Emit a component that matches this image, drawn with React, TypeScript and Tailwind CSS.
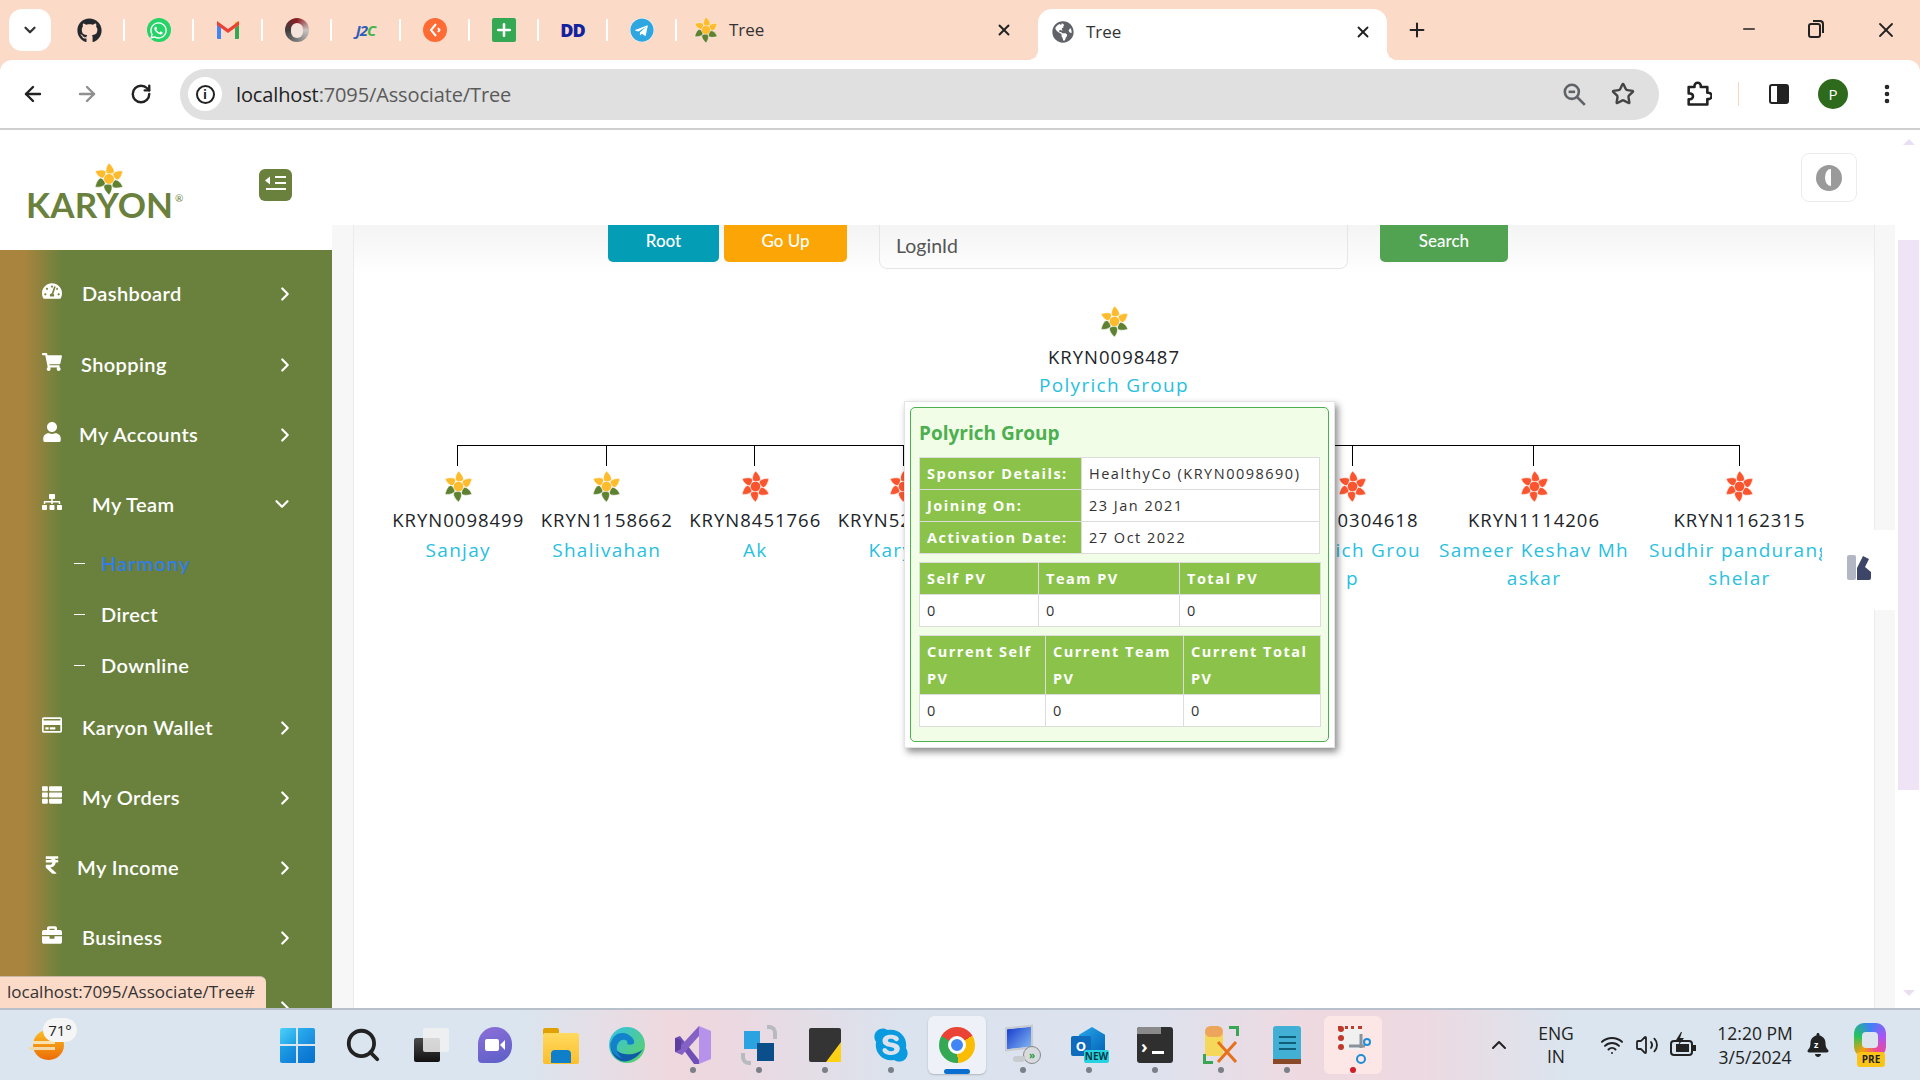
import React from "react";
import { ArrowLeft, ArrowRight, RotateCw, Star, MoreVertical, ChevronDown, ChevronRight, ChevronUp, X, Plus, Minus, Wifi, Volume2, Search } from "lucide-react";
import { FaGithub, FaWhatsapp, FaTelegram, FaGlobeAmericas, FaTachometerAlt, FaShoppingCart, FaUser, FaSitemap, FaRegCreditCard, FaThList, FaRupeeSign, FaBriefcase, FaSkype, FaBell } from "react-icons/fa";

const UI = "font-['Open_Sans','Noto_Sans',sans-serif]";
const OUT = "font-['Lato','Noto_Sans',sans-serif]";

function Flower({ red = false, size = 30 }: { red?: boolean; size?: number }) {
  const y = "#fdbb2d", g = "#5f8232", r = "#fb5530";
  const cols = red ? [r, r, r, r, r, r] : [y, y, g, g, g, y];
  return (
    <svg width={size} height={size} viewBox="-16 -16 32 32">
      {cols.map((c, i) => (
        <path key={i} transform={`rotate(${i * 60})`} fill={c} stroke="#fff" strokeWidth="0.5" d="M0 -16 C3.5 -12.5 5.6 -9.5 5 -6.6 C3.6 -5.2 1.2 -4.8 -2.4 -5.6 C-3.8 -9 -2.8 -12.5 0 -16Z" />
      ))}
      <circle r="5" fill={red ? r : y} />
    </svg>
  );
}

function TreeNode({ id, name, w, red, pad, first, last }: { id: string; name: string; w: string; red?: boolean; pad?: string; first?: boolean; last?: boolean }) {
  return (
    <div className={`${w} shrink-0 flex flex-col items-center`}>
      <div className="w-full h-[21px] flex">
        <div className={`w-1/2 border-r border-black ${first ? "" : "border-t"}`} />
        <div className={`w-1/2 ${last ? "" : "border-t border-black"}`} />
      </div>
      <div className="h-[31px] mt-[5px] flex items-center justify-center"><Flower red={red} size={31} /></div>
      <div className="mt-[4px] text-[18.5px] leading-[28px] text-[#212529] tracking-[1px] whitespace-nowrap">{id}</div>
      <div className={`mt-[2px] w-full ${pad ?? ""} text-center text-[19px] leading-[28px] text-[#29c0e0] tracking-[1.3px] break-all`}>{name}</div>
    </div>
  );
}

const Sep = () => <div className="w-[2px] h-[22px] bg-white" />;

function Bookmark({ children }: { children: React.ReactNode }) {
  return <div className="w-[67px] h-[30px] flex items-center justify-center">{children}</div>;
}

function TabStrip() {
  return (
    <div className={`h-[60px] shrink-0 flex items-start ${UI} text-[#333]`}>
      <div className="ml-[9px] mt-[9px] w-[42px] h-[42px] bg-white rounded-[13px] flex items-center justify-center"><ChevronDown size={18} strokeWidth={3} /></div>
      <div className="ml-[5px] mt-[15px] flex items-center">
        <Bookmark><FaGithub size={25} color="#24292e" /></Bookmark><Sep />
        <Bookmark><div className="w-[24px] h-[24px] rounded-full bg-[#25d366] flex items-center justify-center"><FaWhatsapp size={19} color="#fff" /></div></Bookmark><Sep />
        <Bookmark>
          <svg width="24" height="20" viewBox="0 0 24 20"><path d="M1 19V4l4 3v12H2a1 1 0 0 1-1-1z" fill="#4285f4" /><path d="M23 19V4l-4 3v12h3a1 1 0 0 0 1-1z" fill="#34a853" /><path d="M19 2.5 23 1v4l-4 3z" fill="#fbbc04" /><path d="M1 1v4l11 8 11-8V1l-11 8z" fill="#ea4335" /></svg>
        </Bookmark><Sep />
        <Bookmark><div className="w-[24px] h-[24px] rounded-full bg-[conic-gradient(#8e1c22,#c9c4c2,#7a7a7a,#3d3d3d,#8e1c22)] flex items-center justify-center"><div className="w-[12px] h-[15px] rounded-full bg-[#f3e3da]" /></div></Bookmark><Sep />
        <Bookmark><span className="text-[15px] font-bold italic tracking-[-1px] text-[#2d5fb8]">J2<span className="text-[#43b649]">C</span></span></Bookmark><Sep />
        <Bookmark><div className="w-[24px] h-[24px] rounded-full bg-[#ff6b35] flex items-center justify-center"><svg width="12" height="16" viewBox="0 0 12 16"><path d="M7 2 2 8l5 6M9 6l1.5 2L9 10" fill="none" stroke="#fff" strokeWidth="2" /></svg></div></Bookmark><Sep />
        <Bookmark><div className="w-[24px] h-[24px] rounded-[2px] bg-[#34a853] flex items-center justify-center"><Plus size={20} strokeWidth={3} color="#fff" /></div></Bookmark><Sep />
        <Bookmark><span className="text-[18px] font-extrabold tracking-[-1px] text-[#12239e] leading-none">DD</span></Bookmark><Sep />
        <Bookmark><div className="w-[24px] h-[24px] rounded-full bg-white flex items-center justify-center"><FaTelegram size={24} color="#2ea6e0" /></div></Bookmark><Sep />
      </div>
      <div className="ml-[16px] mt-[16px] w-[333px] flex items-center">
        <Flower size={26} />
        <span className="ml-[10px] text-[17px] leading-[28px]">Tree</span>
        <X size={18} strokeWidth={2.5} className="ml-auto mr-[13px] text-[#222]" />
      </div>
      <div className="relative ml-[12px] mt-[9px] w-[349px] h-[51px] pb-[6px] bg-white rounded-t-[14px] flex items-center pl-[14px]">
        <div className="absolute left-[-10px] bottom-0 w-[10px] h-[10px] bg-[radial-gradient(circle_at_0_0,transparent_10px,white_10px)]" />
        <div className="absolute right-[-10px] bottom-0 w-[10px] h-[10px] bg-[radial-gradient(circle_at_100%_0,transparent_10px,white_10px)]" />
        <FaGlobeAmericas size={22} color="#5f6368" />
        <span className="ml-[12px] text-[17px]">Tree</span>
        <X size={18} strokeWidth={2.5} className="ml-auto mr-[15px] text-[#222]" />
      </div>
      <Plus size={22} strokeWidth={2.2} className="ml-[19px] mt-[19px] text-[#222]" />
      <Minus size={18} strokeWidth={2} className="ml-[312px] mt-[20px] text-[#222]" />
      <div className="relative ml-[50px] mt-[23px] w-[13px] h-[15px] border-2 border-[#222] rounded-[3px]">
        <div className="absolute top-[-5px] right-[-5px] w-[11px] h-[13px] border-t-2 border-r-2 border-[#222] rounded-tr-[4px]" />
      </div>
      <X size={24} strokeWidth={1.8} className="ml-[53px] mt-[18px] text-[#222]" />
    </div>
  );
}

function Toolbar() {
  return (
    <div className={`h-[70px] shrink-0 bg-white rounded-t-[12px] border-b-2 border-[#cfcfcf] flex items-center ${UI}`}>
      <ArrowLeft size={24} strokeWidth={2.4} className="ml-[21px] text-[#222]" />
      <ArrowRight size={24} strokeWidth={2.4} className="ml-[30px] text-[#8f8f8f]" />
      <RotateCw size={22} strokeWidth={2.6} className="ml-[31px] text-[#222]" />
      <div className="ml-[28px] w-[1479px] h-[51px] bg-[#e0e0e0] rounded-full flex items-center pl-[8px]">
        <div className="w-[34px] h-[34px] rounded-full bg-white flex items-center justify-center">
          <div className="w-[19px] h-[19px] rounded-full border-2 border-[#222] flex items-center justify-center text-[13px] font-bold leading-none text-[#222]">i</div>
        </div>
        <span className="ml-[14px] mt-[1px] text-[20px] text-[#222] tracking-[-0.13px]">localhost<span className="text-[#5a5a5a]">:7095/Associate/Tree</span></span>
        <svg width="26" height="26" viewBox="0 0 24 24" fill="none" stroke="#5f6368" strokeWidth="2.4" className="ml-auto"><circle cx="10" cy="10" r="6.5" /><path d="M7 10h6" /><path d="m15 15 7 7" /></svg>
        <Star size={24} strokeWidth={2.4} className="ml-[24px] mr-[24px] text-[#444]" />
      </div>
      <svg width="28" height="28" viewBox="0 0 24 24" fill="none" stroke="#222" strokeWidth="2.2" strokeLinejoin="round" className="ml-[25px]"><path d="M4 6h5V5a2.7 2.7 0 0 1 5.4 0v1H20v5h1a2.7 2.7 0 0 1 0 5.400h-1V21H4v-4.500h1.200a2.500 2.500 0 0 0 0-5H4z" /></svg>
      <div className="ml-[26px] w-[1px] h-[24px] bg-[#fbd5c2]" />
      <div className="ml-[30px] w-[20px] h-[20px] border-2 border-[#222] rounded-[3px] flex justify-end"><div className="w-[10px] bg-[#222]" /></div>
      <div className="ml-[29px] w-[30px] h-[30px] rounded-full bg-[#2d6a1c] text-white text-[15px] flex items-center justify-center">P</div>
      <MoreVertical size={24} strokeWidth={2.6} className="ml-[27px] text-[#222]" />
    </div>
  );
}

const menu = [
  { t: "Dashboard", I: FaTachometerAlt, ml: "ml-[20px]", h: "h-[72px]" },
  { t: "Shopping", I: FaShoppingCart, ml: "ml-[19px]", h: "h-[70px]" },
  { t: "My Accounts", I: FaUser, ml: "ml-[17px]", h: "h-[70px]" },
];
const menu2 = [
  { t: "Karyon Wallet", I: FaRegCreditCard, ml: "ml-[20px]", h: "h-[70px]" },
  { t: "My Orders", I: FaThList, ml: "ml-[20px]", h: "h-[70px]" },
  { t: "My Income", I: FaRupeeSign, ml: "ml-[15px]", h: "h-[70px]" },
  { t: "Business", I: FaBriefcase, ml: "ml-[20px]", h: "h-[70px]" },
];

function Item({ t, I, ml, h }: { t: string; I: any; ml: string; h: string }) {
  return (
    <div className={`${h} flex items-center pl-[42px]`}>
      <div className="w-[20px] flex justify-center mb-[6px]"><I size={20} /></div>
      <span className={`${ml} mb-[2px] text-[20px] font-semibold tracking-[0.4px]`}>{t}</span>
      <ChevronRight size={22} strokeWidth={2.4} className="ml-auto mr-[36px]" />
    </div>
  );
}

function Sub({ t, h, blue }: { t: string; h: string; blue?: boolean }) {
  return (
    <div className={`${h} flex items-center pl-[74px]`}>
      <div className="w-[11px] h-[1px] bg-white mb-[3px]" />
      <span className={`ml-[16px] mb-[4px] text-[20px] font-semibold ${blue ? "text-[#2f7ce8] tracking-[1.1px] font-medium" : "tracking-[0.4px]"}`}>{t}</span>
    </div>
  );
}

function Sidebar() {
  return (
    <aside className={`w-[332px] shrink-0 flex flex-col ${OUT}`}>
      <div className="h-[120px] shrink-0 bg-white flex relative">
        <div className="relative ml-[26px] mt-[33px] w-[160px]">
          <div className="absolute left-[67px] top-0"><Flower size={32} /></div>
          <div className="absolute left-0 top-[19px] text-[35px] leading-[44px] font-bold tracking-[0.2px] text-[#6a813d]">KARYON</div>
          <div className="absolute left-[149px] top-[29px] text-[10px] leading-[12px] text-[#6a813d]">®</div>
        </div>
        <div className="ml-[73px] mt-[39px] w-[33px] h-[32px] rounded-[6px] bg-[#6a813d] flex flex-col justify-center items-end px-[6px] gap-[3px] relative">
          <svg width="21" height="22" viewBox="0 0 21 22" fill="#fff"><path d="M0 6.5 5 2.500v8z" /><rect x="10" y="2" width="11" height="2" /><rect x="10" y="8" width="11" height="2" /><rect y="14" x="1" width="20" height="2" /></svg>
        </div>
      </div>
      <div className="flex-1 pt-[8px] overflow-hidden text-white bg-[linear-gradient(90deg,#a8843f_0,#a8843f_25px,#6a813d_62px,#6a813d_100%)]">
        {menu.map((m) => <Item key={m.t} {...m} />)}
        <div className="h-[70px] flex items-center pl-[42px]">
          <div className="w-[20px] flex justify-center mb-[6px]"><FaSitemap size={20} /></div>
          <span className="ml-[30px] mb-[2px] text-[20px] font-semibold tracking-[0.4px]">My Team</span>
          <ChevronDown size={22} strokeWidth={2.4} className="ml-auto mr-[39px] mb-[2px]" />
        </div>
        <Sub t="Harmony" h="h-[50px]" blue />
        <Sub t="Direct" h="h-[51px]" />
        <Sub t="Downline" h="h-[52px]" />
        {menu2.map((m) => <Item key={m.t} {...m} />)}
        <div className="h-[70px] flex items-center"><ChevronRight size={22} strokeWidth={2.4} className="ml-auto mr-[36px]" /></div>
      </div>
    </aside>
  );
}

const TH = "bg-[#8bc34a] text-white font-bold px-[7px] border border-[#dcdcdc]";
const TD = "px-[7px] border border-[#dcdcdc] text-[#333] bg-white";

function PvTable({ cols, rows, tall }: { cols: string[]; rows: string[]; tall?: boolean }) {
  return (
    <table className="mt-[8px] w-[401px] table-fixed border-collapse">
      <colgroup>{cols.map((c) => <col key={c} className={c} />)}</colgroup>
      <tbody>
        <tr className={tall ? "h-[59px]" : "h-[32px]"}>{rows.map((r) => <th key={r} className={`${TH} text-left ${tall ? "leading-[27px]" : "leading-[28px]"}`}>{r}</th>)}</tr>
        <tr className="h-[32px]">{rows.map((r) => <td key={r} className={TD}>0</td>)}</tr>
      </tbody>
    </table>
  );
}

function Popup() {
  return (
    <div className={`absolute left-[904px] top-[271px] w-[431px] h-[347px] bg-white border border-[#e4e4e4] shadow-[3px_4px_7px_rgba(0,0,0,0.45)] p-[5px] ${UI}`}>
      <div className="h-[335px] border border-[#4caf50] rounded-[5px] bg-[#f1fde6] px-[8px] tracking-[1.5px] text-[14.5px]">
        <div className="h-[49px] pt-[10px] text-[19px] leading-[30px] tracking-normal font-bold text-[#4caf50]">Polyrich Group</div>
        <table className="w-[401px] table-fixed border-collapse">
          <colgroup><col className="w-[162px]" /><col /></colgroup>
          <tbody>
            {[["Sponsor Details:", "HealthyCo (KRYN0098690)"], ["Joining On:", "23 Jan 2021"], ["Activation Date:", "27 Oct 2022"]].map(([a, b]) => (
              <tr key={a} className="h-[32px]"><th className={`${TH} text-left`}>{a}</th><td className={TD}>{b}</td></tr>
            ))}
          </tbody>
        </table>
        <PvTable cols={["w-[119px]", "w-[141px]", "w-[141px]"]} rows={["Self PV", "Team PV", "Total PV"]} />
        <PvTable tall cols={["w-[126px]", "w-[138px]", "w-[137px]"]} rows={["Current Self PV", "Current Team PV", "Current Total PV"]} />
      </div>
    </div>
  );
}

function Main() {
  return (
    <main className="flex-1 min-w-0 flex flex-col bg-white">
      <header className="h-[95px] shrink-0 bg-white flex justify-end items-start pr-[40px] pt-[23px]">
        <div className="w-[56px] h-[49px] rounded-[8px] border border-[#ececec] flex items-center justify-center">
          <div className="w-[26px] h-[26px] rounded-full bg-[#9a9a9a] flex items-center justify-center"><div className="w-[11px] h-[17px] rounded-[50%] bg-[linear-gradient(90deg,#fff_50%,#9a9a9a_50%)] ml-[2px]" /></div>
        </div>
      </header>
      <div className="flex-1 min-h-0 flex overflow-hidden">
        <div className="w-[21px] shrink-0 bg-[#f7f7f8]" />
        <div className={`w-[1522px] shrink-0 border-x border-[#ebebeb] bg-[linear-gradient(180deg,#f4f4f4_0,#ffffff_50px)] ${UI}`}>
          <div className={`-mt-[20px] pl-[254px] flex items-start ${OUT} text-white text-[17px] font-medium`}>
            <div className="w-[111px] h-[57px] pt-[15px] bg-[#039db5] rounded-[5px] flex items-center justify-center">Root</div>
            <div className="ml-[5px] w-[123px] h-[57px] pt-[15px] bg-[#fba506] rounded-[5px] flex items-center justify-center">Go Up</div>
            <div className="ml-[32px] w-[469px] h-[64px] pt-[18px] pl-[16px] border border-[#e6e6e6] rounded-[8px] flex items-center text-[19.5px] font-normal text-[#555]">LoginId</div>
            <div className="ml-[32px] w-[128px] h-[57px] pt-[15px] bg-[#51a351] rounded-[5px] flex items-center justify-center">Search</div>
          </div>
          <div className="mt-[37px] flex flex-col items-center">
            <Flower size={31} />
            <div className="mt-[6px] text-[18.5px] leading-[28px] tracking-[1px] text-[#212529]">KRYN0098487</div>
            <div className="text-[19px] leading-[28px] tracking-[1.3px] text-[#29c0e0]">Polyrich Group</div>
            <div className="mt-[6px] w-[1px] h-[40px] bg-black" />
          </div>
          <div className="pl-[30px] flex">
            <TreeNode first w="w-[148.5px]" id="KRYN0098499" name="Sanjay" />
            <TreeNode w="w-[148.5px]" id="KRYN1158662" name="Shalivahan" />
            <TreeNode red w="w-[148.5px]" id="KRYN8451766" name="Ak" />
            <TreeNode red w="w-[148.5px]" id="KRYN5200000" name="Karyon" />
            <TreeNode red w="w-[144px]" id="" name="" />
            <TreeNode red w="w-[144px]" id="" name="" />
            <TreeNode red w="w-[173px]" pad="px-[13px]" id="KRYN0304618" name="Polyrich Group" />
            <TreeNode red w="w-[198px] -mx-[4px]" id="KRYN1114206" name="Sameer Keshav Mhaskar" />
            <TreeNode red last w="w-[221px]" pad="px-[15px]" id="KRYN1162315" name="Sudhir pandurang shelar" />
          </div>
        </div>
        <div className="w-[20px] shrink-0 bg-[#f7f7f8]" />
        <div className="w-[2px] shrink-0 bg-white" />
      </div>
    </main>
  );
}

function Scrollbar() {
  return (
    <div className="w-[23px] shrink-0 bg-white flex flex-col items-center">
      <div className="mt-[9px] w-0 h-0 border-x-[6px] border-x-transparent border-b-[6px] border-b-[#eadff2]" />
      <div className="mt-[95px] w-[21px] h-[550px] bg-[#efe4f5]" />
      <div className="mt-[200px] w-0 h-0 border-x-[6px] border-x-transparent border-t-[6px] border-t-[#eadff2]" />
    </div>
  );
}

function TB({ children, dot, bg, bar }: { children: React.ReactNode; dot?: string; bg?: string; bar?: boolean }) {
  return (
    <div className="relative w-[66px] h-full flex items-center justify-center">
      {bg && <div className={`absolute top-[6px] left-[4px] right-[4px] bottom-[6px] rounded-[6px] ${bg}`} />}
      <div className="relative">{children}</div>
      {dot && <div className={`absolute bottom-[7px] left-[30px] w-[6px] h-[6px] rounded-full ${dot}`} />}
      {bar && <div className="absolute bottom-[6px] left-[20px] w-[26px] h-[5px] rounded-full bg-[#0a6fd0]" />}
    </div>
  );
}

const G = "bg-[#7b7f87]";

function Taskbar() {
  return (
    <div className={`h-[72px] shrink-0 border-t-2 border-[#b8c1cb] flex items-center relative ${UI} text-[#222] bg-[linear-gradient(90deg,#dae5ef_0,#dae5ef_27%,#efd8de_35%,#ecd8e0_38%,#dae3ee_47%,#dde2ee_60%,#efd9e0_68%,#edd9e1_74%,#dae5ef_82%,#dae5ef_100%)]`}>
      <div className="relative ml-[30px] w-[50px] h-full">
        <div className="absolute left-[3px] top-[20px] w-[31px] h-[30px] rounded-full bg-[linear-gradient(180deg,#fbbd26,#ec6c05)] flex flex-col justify-center gap-[3px]">
          <div className="h-[3px] w-[22px] bg-[#f8e2ad]" /><div className="h-[3px] w-[26px] -ml-[4px] bg-[#f3d9a8]" />
        </div>
        <div className="absolute left-[13px] top-[8px] w-[34px] h-[24px] rounded-full bg-[#f4f5f4] text-[15px] leading-[24px] text-center">71°</div>
      </div>
      <div className="ml-[184px] h-full flex">
        <TB><div className="grid grid-cols-2 gap-[2px] w-[35px] h-[35px]"><div className="bg-[linear-gradient(135deg,#4fd0fa,#1a9fe2)] rounded-tl-[2px]" /><div className="bg-[linear-gradient(135deg,#2bb0ee,#1788dd)] rounded-tr-[2px]" /><div className="bg-[linear-gradient(135deg,#1ea2e6,#0f7dd6)] rounded-bl-[2px]" /><div className="bg-[linear-gradient(135deg,#1787dd,#0672cc)] rounded-br-[2px]" /></div></TB>
        <TB><Search size={38} strokeWidth={2.4} className="text-[#222]" /></TB>
        <TB>
          <div className="relative w-[30px] h-[34px]">
            <div className="absolute left-0 bottom-0 w-[26px] h-[24px] rounded-[2px] bg-[linear-gradient(180deg,#4a4a4a,#111)]" />
            <div className="absolute left-[9px] top-0 w-[26px] h-[24px] rounded-[2px] bg-[#f1f1f1]/85" />
          </div>
        </TB>
        <TB>
          <div className="w-[34px] h-[36px] rounded-[17px_17px_17px_4px] bg-[linear-gradient(160deg,#8d6fd8,#5b5fc7)] flex items-center justify-center gap-[1px]"><div className="w-[14px] h-[12px] rounded-[2px] bg-white" /><div className="w-0 h-0 border-y-[5px] border-y-transparent border-r-[5px] border-r-white" /></div>
        </TB>
        <TB>
          <div className="relative w-[36px] h-[36px] mt-[2px]">
            <div className="absolute left-0 top-0 w-[16px] h-[8px] rounded-t-[2px] bg-[#e0a100]" />
            <div className="absolute left-0 top-[5px] w-[36px] h-[31px] rounded-[2px] bg-[linear-gradient(180deg,#ffd95e,#fdbf2d)]" />
            <div className="absolute left-[8px] bottom-[1px] w-[20px] h-[13px] rounded-t-[4px] bg-[#0f7fc9]" />
          </div>
        </TB>
        <TB>
          <svg width="36" height="36" viewBox="0 0 36 36"><defs><linearGradient id="e1" x1="0" y1="0" x2="1" y2="1"><stop offset="0" stopColor="#34c1e8" /><stop offset="1" stopColor="#5ed25f" /></linearGradient></defs><circle cx="18" cy="18" r="18" fill="url(#e1)" /><path d="M34 22C30 30 20 36 12 34 4 31 0 22 2 14c2 6 6 12 14 13 7 1 14-1 18-5z" fill="#0f5ba8" /><path d="M2 16C4 6 14 4 20 8c3 2 6 5 5 8-1 2-4 2-7 1 2-3-3-6-7-3-5 4-4 12 2 17C6 30 1 24 2 16z" fill="#1382cc" /></svg>
        </TB>
        <TB dot={G}>
          <svg width="36" height="40" viewBox="0 0 36 40"><path d="M24 1 36 6v28l-12 5z" fill="#b792ea" /><path d="M0 13l5-2 19 24v4l-5 0z" fill="#6f4fb5" /><path d="M24 1v10L7 30l-7-3z" fill="#8661c5" /><path d="M0 13v14l6-3V15z" fill="#5c3e9e" /></svg>
        </TB>
        <TB dot={G}>
          <div className="relative w-[36px] h-[40px]">
            <div className="absolute left-[3px] top-[6px] w-[16px] h-[18px] bg-[#2ba3e0]" />
            <div className="absolute right-[3px] top-[18px] w-[17px] h-[18px] bg-[#0b4f8a]" />
            <div className="absolute right-0 top-0 w-[10px] h-[14px] rounded-tr-[8px] border-t-4 border-r-4 border-[#b7bbbf]" />
            <div className="absolute left-0 bottom-0 w-[10px] h-[12px] rounded-bl-[8px] border-b-4 border-l-4 border-[#b7bbbf]" />
          </div>
        </TB>
        <TB dot={G}>
          <div className="relative w-[32px] h-[34px] bg-[#343434] rounded-[2px]"><div className="absolute right-0 bottom-0 w-[15px] h-[20px] bg-[#fcd116] [clip-path:polygon(100%_0,100%_100%,0_100%,0_100%)]" /></div>
        </TB>
        <TB dot={G}><FaSkype size={38} color="#0a9ae0" /></TB>
        <TB bg="bg-[#eef2f8] shadow-[0_1px_2px_rgba(0,0,0,0.2)]" bar>
          <div className="w-[36px] h-[36px] rounded-full bg-[conic-gradient(from_-60deg,#ea4335_0_33%,#fbbc04_33%_66%,#34a853_66%_100%)] flex items-center justify-center"><div className="w-[18px] h-[18px] rounded-full bg-[#4285f4] border-[3px] border-white" /></div>
        </TB>
        <TB dot={G}>
          <div className="relative w-[36px] h-[38px]">
            <div className="absolute left-0 top-0 w-[28px] h-[24px] bg-[linear-gradient(135deg,#1a3fd0,#7fb3f0)] border-2 border-[#c8ccd0] -skew-y-6" />
            <div className="absolute right-0 bottom-0 w-[18px] h-[18px] rounded-full bg-[#d8dbde] border border-[#888] text-[10px] text-[#2a9d3a] font-bold text-center leading-[16px]">»</div>
            <div className="absolute left-[8px] bottom-[2px] w-[12px] h-[6px] rounded-full bg-[#c8ccd0]" />
          </div>
        </TB>
        <TB dot={G}>
          <div className="relative w-[36px] h-[36px]">
            <div className="absolute left-[8px] top-0 w-[26px] h-[26px] bg-[linear-gradient(135deg,#28a8ea,#0364b8)] [clip-path:polygon(50%_0,100%_30%,100%_100%,0_100%,0_30%)]" />
            <div className="absolute left-0 top-[9px] w-[20px] h-[20px] rounded-[2px] bg-[#0f6cbd] text-white text-[13px] font-bold leading-[20px] text-center">O</div>
            <div className="absolute right-[-2px] bottom-0 w-[25px] h-[13px] rounded-[2px] bg-[#27d3e0] text-[#063a4a] text-[10px] font-bold leading-[13px] text-center">NEW</div>
          </div>
        </TB>
        <TB dot={G}>
          <div className="w-[36px] h-[36px] rounded-[3px] bg-[#2f2f2f] relative overflow-hidden">
            <div className="h-[7px] bg-[#8a8a8a] w-[24px]" />
            <span className="absolute left-[4px] top-[8px] text-white text-[18px] font-bold leading-[22px]">›</span>
            <div className="absolute left-[15px] bottom-[9px] w-[12px] h-[3px] bg-white" />
          </div>
        </TB>
        <TB dot={G}>
          <div className="relative w-[36px] h-[38px]">
            <div className="absolute left-[2px] top-0 w-[18px] h-[30px] rounded-[9px_9px_3px_3px] bg-[#f5d75a]"><div className="h-[11px] rounded-[9px] bg-[#eda55b]" /></div>
            <div className="absolute right-0 top-0 w-[10px] h-[10px] border-t-[3px] border-r-[3px] border-[#3aa655]" />
            <div className="absolute left-0 bottom-0 w-[10px] h-[10px] border-b-[3px] border-l-[3px] border-[#3aa655]" />
            <svg className="absolute right-[0px] bottom-[0px]" width="24" height="26" viewBox="0 0 24 26"><path d="M3 24 21 4M21 24 3 4" stroke="#e8701a" strokeWidth="3" /></svg>
          </div>
        </TB>
        <TB dot={G}>
          <div className="w-[28px] h-[38px] rounded-t-[3px] bg-[#41b0d4] flex flex-col items-center justify-center gap-[4px] border-b-[5px] border-[#8a4a2a]">
            <div className="w-[17px] h-[2px] bg-[#0f5d78]" /><div className="w-[17px] h-[2px] bg-[#0f5d78]" /><div className="w-[17px] h-[2px] bg-[#0f5d78]" />
          </div>
        </TB>
        <TB dot="bg-[#d01f2a]" bg="bg-[#fde6e6]">
          <div className="relative w-[36px] h-[38px]">
            <div className="absolute left-[3px] top-0 w-[24px] h-[24px] bg-[#f0f0f0] border-l-[6px] border-t-[3px] border-dotted border-[#c0392b]" />
            <svg className="absolute right-0 bottom-0" width="24" height="32" viewBox="0 0 24 32"><path d="M14 2v14M2 14h16" stroke="#8a939c" strokeWidth="3" /><circle cx="20" cy="10" r="3" fill="none" stroke="#1d8fd6" strokeWidth="2" /><circle cx="14" cy="27" r="4" fill="none" stroke="#1d8fd6" strokeWidth="2" /></svg>
          </div>
        </TB>
      </div>
      <ChevronUp size={24} strokeWidth={2} className="ml-[101px] text-[#222]" />
      <div className="ml-[23px] w-[44px] text-center text-[17.500px] leading-[23px]">ENG<br />IN</div>
      <Wifi size={24} strokeWidth={2} className="ml-[22px]" />
      <Volume2 size={24} strokeWidth={1.8} className="ml-[11px]" />
      <svg width="28" height="28" viewBox="0 0 28 28" fill="none" className="ml-[10px]"><rect x="2" y="10" width="21" height="14" rx="3" stroke="#222" strokeWidth="2" /><rect x="7" y="13" width="13" height="8" fill="#222" /><rect x="24" y="14" width="3" height="6" fill="#222" /><path d="M12 1 7 9h4l-2 6 6-8h-4l2-6z" fill="#222" /></svg>
      <div className="ml-[8px] w-[100px] text-center text-[17.500px] leading-[24px]">12:20 PM<br />3/5/2024</div>
      <div className="ml-[1px] relative"><FaBell size={24} color="#222" /><span className="absolute left-[8px] top-[7px] text-[9px] font-bold text-white leading-none">z</span></div>
      <div className="ml-[22px] relative w-[36px] h-[44px]">
        <div className="absolute left-[2px] top-0 w-[32px] h-[34px] rounded-[10px] bg-[conic-gradient(#3b82f6,#a855f7,#ec4899,#f59e0b,#22c55e,#3b82f6)]" />
        <div className="absolute left-[10px] top-[9px] w-[16px] h-[16px] rounded-[4px] bg-[#dce4ee]" />
        <div className="absolute left-[5px] bottom-0 w-[28px] h-[15px] rounded-[3px] bg-[#fcc419] text-[10px] font-bold text-center leading-[15px]">PRE</div>
      </div>
    </div>
  );
}

export default function App() {
  return (
    <div className="w-[1920px] h-[1080px] overflow-hidden flex flex-col bg-[#fcdac8]">
      <TabStrip />
      <Toolbar />
      <div className="relative h-[878px] shrink-0 flex bg-white overflow-hidden">
        <Sidebar />
        <Main />
        <Scrollbar />
        <Popup />
        <div className="absolute left-[1822px] top-[400px] w-[73px] h-[80px] pb-[4px] bg-white rounded-l-[6px] flex items-center justify-center">
          <svg width="26" height="28" viewBox="0 0 26 28"><rect x="1" y="1" width="9" height="25" rx="2" fill="#b3b7c4" /><path d="M11 26V14l6-12 6 3-4 8 6 5v6a2 2 0 0 1-2 2z" fill="#3d4668" /></svg>
        </div>
        <div className={`absolute left-0 bottom-0 w-[266px] h-[32px] bg-[#fcdac8] border-t border-[#c9b5a8] rounded-tr-[6px] pl-[7px] text-[17px] leading-[30px] text-[#333] whitespace-nowrap overflow-hidden ${UI}`}>localhost:7095/Associate/Tree#</div>
      </div>
      <Taskbar />
    </div>
  );
}
